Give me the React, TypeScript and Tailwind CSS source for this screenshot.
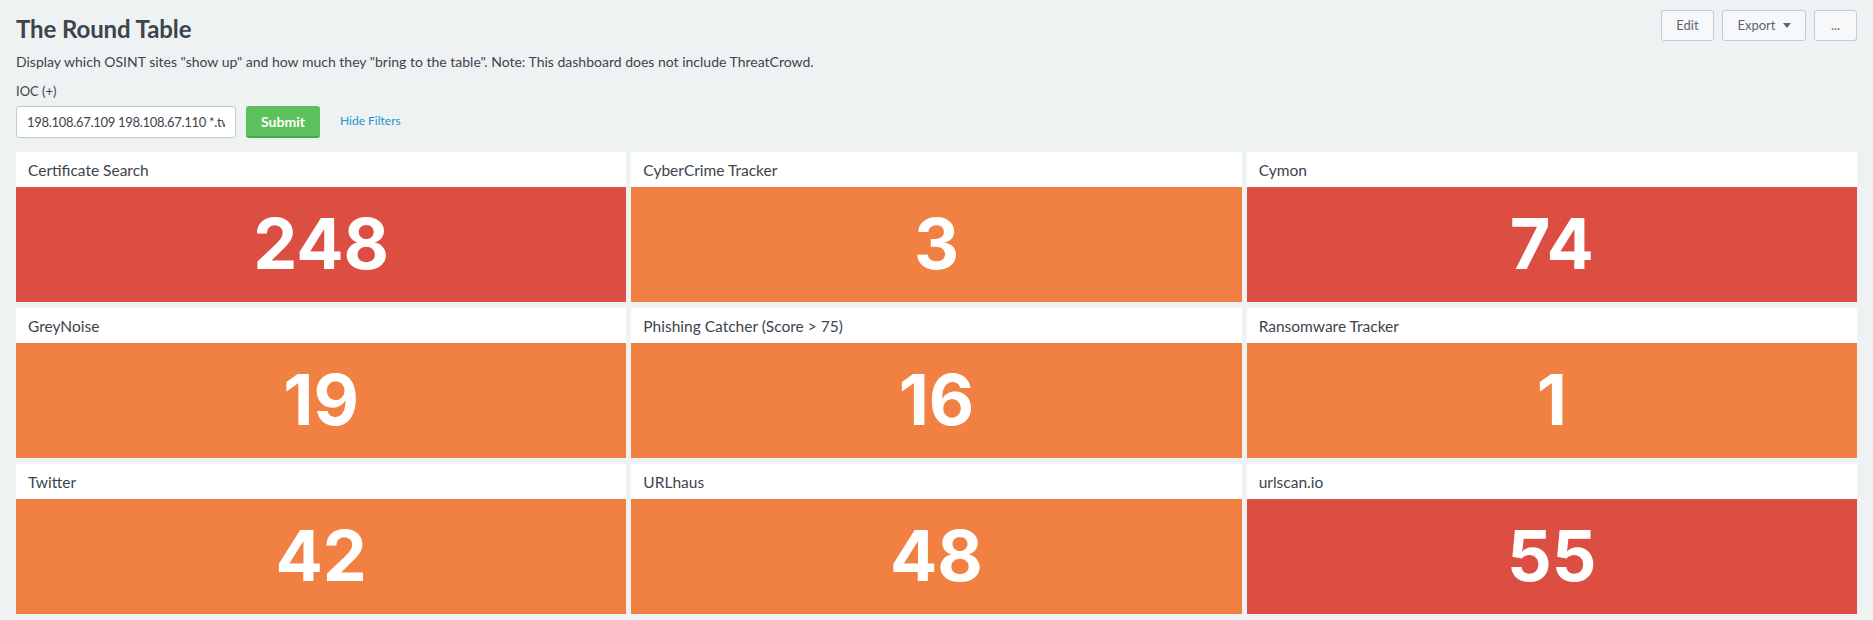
const panels = [
  { title: "Certificate Search", value: "248", color: "red" },
  { title: "CyberCrime Tracker", value: "3", color: "orange" },
  { title: "Cymon", value: "74", color: "red" },
  { title: "GreyNoise", value: "19", color: "orange" },
  { title: "Phishing Catcher (Score > 75)", value: "16", color: "orange" },
  { title: "Ransomware Tracker", value: "1", color: "orange" },
  { title: "Twitter", value: "42", color: "orange" },
  { title: "URLhaus", value: "48", color: "orange" },
  { title: "urlscan.io", value: "55", color: "red" },
];

function Panel({ title, value, color }: { title: string; value: string; color: string }) {
  return (
    <div className="flex flex-col h-[150px] bg-white">
      <div className="h-[35px] flex items-center px-3 pt-[3px] text-[15.5px] text-[#3c444d]">{title}</div>
      <div
        className={
          "flex-1 flex items-center justify-center text-white font-bold text-[70px] font-['Inter',sans-serif] " +
          (color === "red" ? "bg-[#dc4e41]" : "bg-[#f08142]")
        }
      >
        <span className="leading-none -mt-[2px]">{value}</span>
      </div>
    </div>
  );
}

export default function App() {
  return (
    <div className="min-h-[620px] bg-[#eff2f3] font-['Lato',sans-serif] text-[#3c444d]">
      <header className="flex justify-between px-4 pt-[10px]">
        <div>
          <h1 className="text-[24px] font-bold leading-none mt-[7px] tracking-[-0.1px]">The Round Table</h1>
          <p className="text-[14px] mt-[14px] leading-none">
            Display which OSINT sites "show up" and how much they "bring to the table". Note: This dashboard does not include ThreatCrowd.
          </p>
        </div>
        <div className="flex gap-2">
          <button className="h-[31px] w-[53px] rounded-[3px] border border-[#c3cbd4] bg-[#f7f8fa] text-[13px] text-[#5c6773]">Edit</button>
          <button className="h-[31px] w-[84px] rounded-[3px] border border-[#c3cbd4] bg-[#f7f8fa] text-[13px] text-[#5c6773] flex items-center justify-center gap-[7px]">
            Export
            <svg width="8" height="5" viewBox="0 0 8 5">
              <path d="M0 0h8L4 5z" fill="#5c6773" />
            </svg>
          </button>
          <button className="h-[31px] w-[43px] rounded-[3px] border border-[#c3cbd4] bg-[#f7f8fa] text-[13px] text-[#5c6773]">...</button>
        </div>
      </header>

      <div className="px-4 mt-[16px]">
        <label className="text-[13px] block leading-none">IOC (+)</label>
        <div className="flex items-center mt-[8px]">
          <input
            readOnly
            value="198.108.67.109 198.108.67.110 *.twitter.com"
            className="h-[32px] w-[220px] rounded-[3px] border border-[#c3cbd4] bg-white px-[10px] text-[13px] tracking-[-0.3px] text-[#3c444d] outline-none"
          />
          <button className="ml-[10px] h-[32px] w-[74px] rounded-[3px] bg-[#5cc05c] border-b-2 border-[#4aa44a] text-white font-bold text-[14px]">
            Submit
          </button>
          <a className="ml-[20px] -mt-[2px] text-[12px] text-[#1e93c6]">Hide Filters</a>
        </div>
      </div>

      <div className="grid grid-cols-3 gap-x-[5px] gap-y-[6px] px-4 mt-[14px]">
        {panels.map((p) => (
          <Panel key={p.title} {...p} />
        ))}
      </div>
    </div>
  );
}
